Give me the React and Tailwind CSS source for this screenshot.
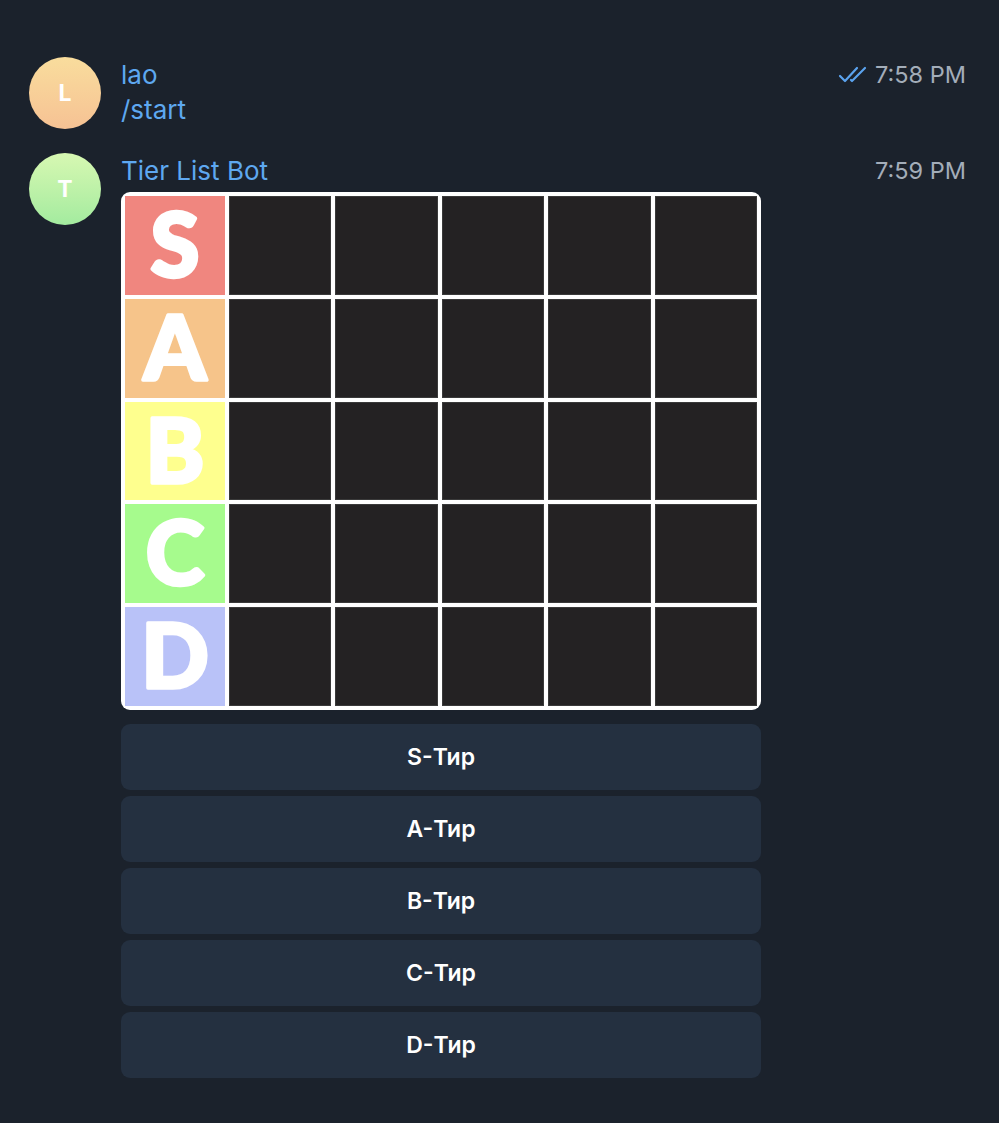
const tiers = [
  { label: 'S', color: 'bg-[#f0867f]' },
  { label: 'A', color: 'bg-[#f6c48a]' },
  { label: 'B', color: 'bg-[#feff8e]' },
  { label: 'C', color: 'bg-[#a6fb8d]' },
  { label: 'D', color: 'bg-[#b9c2f8]' },
];

function DoubleCheck() {
  return (
    <svg width="30" height="18" viewBox="0 0 30 18" fill="none" stroke="#5ba3ee" strokeWidth="2.2" strokeLinecap="round" strokeLinejoin="round">
      <path d="M2 10l5 5L19 2" />
      <path d="M13 14l1 1L27 2" />
    </svg>
  );
}

function Avatar({ letter, gradient }) {
  return (
    <div className={`w-[72px] h-[72px] rounded-full shrink-0 flex items-center justify-center text-white text-[23px] font-bold ${gradient}`}>
      {letter}
    </div>
  );
}

function TierImage() {
  return (
    <div className="w-[640px] h-[518px] bg-white rounded-[9px] p-[4px] grid grid-cols-[100px_repeat(5,1fr)] grid-rows-5 gap-[4px] overflow-hidden">
      {tiers.map((t) => [
        <div key={t.label} className={`${t.color} overflow-hidden`}>
          <svg viewBox="0 0 100 99" className="w-full h-full">
            <text
              x="50"
              y="81.5"
              textAnchor="middle"
              fill="#ffffff"
              stroke="#ffffff"
              strokeWidth="3.5"
              strokeLinejoin="round"
              fontSize="89"
              fontWeight="900"
              fontFamily='Lato, "Open Sans", sans-serif'
            >
              {t.label}
            </text>
          </svg>
        </div>,
        ...[0, 1, 2, 3, 4].map((i) => (
          <div key={t.label + i} className="bg-[#242223] border border-[#3a3a3a]" />
        )),
      ])}
    </div>
  );
}

export default function App() {
  return (
    <div className="min-h-[1123px] bg-[#1b222c] pt-[57px] pl-[29px] pr-[33px]" style={{ fontFamily: 'Inter, "Noto Sans", sans-serif' }}>
      <div className="flex gap-[20px]">
        <Avatar letter="L" gradient="bg-gradient-to-b from-[#f9dd9d] to-[#f6c294]" />
        <div className="flex-1">
          <div className="flex items-center justify-between h-[35px]">
            <span className="text-[26px] text-[#5ea8f0]">lao</span>
            <span className="flex items-center gap-[7px] text-[23.5px] text-[#a3adb9]">
              <DoubleCheck />
              7:58 PM
            </span>
          </div>
          <div className="h-[35px] flex items-center text-[26px] text-[#5ea8f0]">/start</div>
        </div>
      </div>

      <div className="flex gap-[20px] mt-[24px]">
        <Avatar letter="T" gradient="bg-gradient-to-b from-[#d7f8b2] to-[#a3eb9f]" />
        <div className="flex-1">
          <div className="flex items-center justify-between h-[35px]">
            <span className="text-[26px] text-[#5ea8f0]">Tier List Bot</span>
            <span className="text-[23.5px] text-[#a3adb9]">7:59 PM</span>
          </div>
          <div className="mt-[4px]">
            <TierImage />
          </div>
          <div className="mt-[14px] w-[640px] flex flex-col gap-[6px]">
            {tiers.map((t) => (
              <button key={t.label} className="h-[66px] rounded-[9px] bg-[#243040] text-white text-[23px] font-semibold">
                {t.label}-Тир
              </button>
            ))}
          </div>
        </div>
      </div>
    </div>
  );
}
